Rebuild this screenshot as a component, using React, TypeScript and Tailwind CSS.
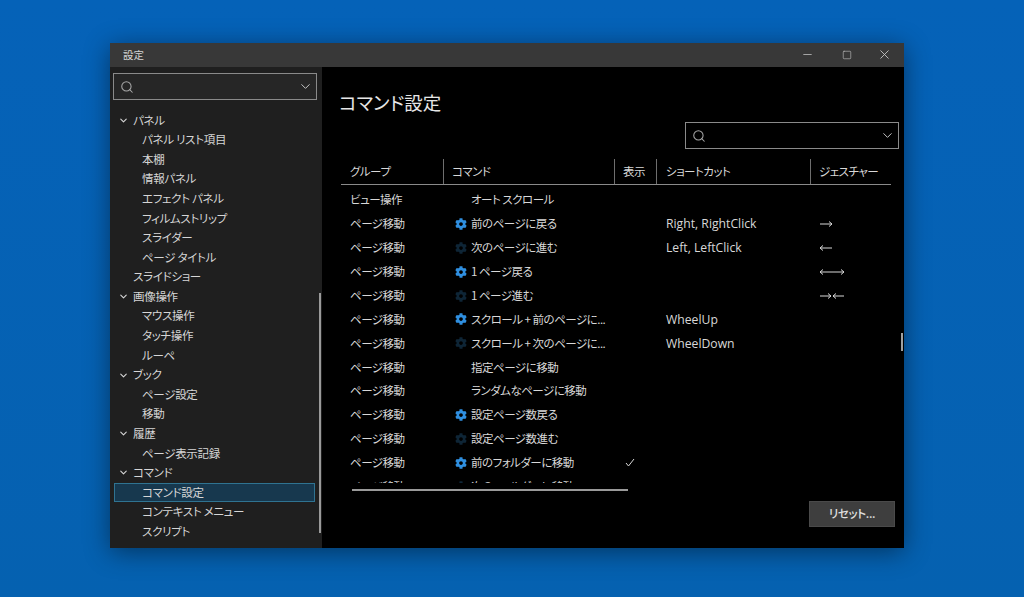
import React from 'react';
import { Search, ChevronDown, Minus, Square, X } from 'lucide-react';
import { FaCog } from 'react-icons/fa';

const font = "font-['Noto_Sans_CJK_JP','Noto_Sans',sans-serif] [font-feature-settings:'palt']";

type TreeItem = { label: string; level: 1 | 2; open?: boolean; selected?: boolean };

const tree: TreeItem[] = [
  { label: 'パネル', level: 1, open: true },
  { label: 'パネル リスト項目', level: 2 },
  { label: '本棚', level: 2 },
  { label: '情報パネル', level: 2 },
  { label: 'エフェクト パネル', level: 2 },
  { label: 'フィルムストリップ', level: 2 },
  { label: 'スライダー', level: 2 },
  { label: 'ページ タイトル', level: 2 },
  { label: 'スライドショー', level: 1 },
  { label: '画像操作', level: 1, open: true },
  { label: 'マウス操作', level: 2 },
  { label: 'タッチ操作', level: 2 },
  { label: 'ルーペ', level: 2 },
  { label: 'ブック', level: 1, open: true },
  { label: 'ページ設定', level: 2 },
  { label: '移動', level: 2 },
  { label: '履歴', level: 1, open: true },
  { label: 'ページ表示記録', level: 2 },
  { label: 'コマンド', level: 1, open: true },
  { label: 'コマンド設定', level: 2, selected: true },
  { label: 'コンテキスト メニュー', level: 2 },
  { label: 'スクリプト', level: 2 },
];

type Row = { group: string; command: string; gear?: 'on' | 'off'; show?: boolean; key?: string; gesture?: string };

const rows: Row[] = [
  { group: 'ビュー操作', command: 'オート スクロール' },
  { group: 'ページ移動', command: '前のページに戻る', gear: 'on', key: 'Right, RightClick', gesture: '→' },
  { group: 'ページ移動', command: '次のページに進む', gear: 'off', key: 'Left, LeftClick', gesture: '←' },
  { group: 'ページ移動', command: '1 ページ戻る', gear: 'on', gesture: '←→' },
  { group: 'ページ移動', command: '1 ページ進む', gear: 'off', gesture: '→←' },
  { group: 'ページ移動', command: 'スクロール + 前のページに...', gear: 'on', key: 'WheelUp' },
  { group: 'ページ移動', command: 'スクロール + 次のページに...', gear: 'off', key: 'WheelDown' },
  { group: 'ページ移動', command: '指定ページに移動' },
  { group: 'ページ移動', command: 'ランダムなページに移動' },
  { group: 'ページ移動', command: '設定ページ数戻る', gear: 'on' },
  { group: 'ページ移動', command: '設定ページ数進む', gear: 'off' },
  { group: 'ページ移動', command: '前のフォルダーに移動', gear: 'on', show: true },
  { group: 'ページ移動', command: '次のフォルダーに移動', gear: 'off', show: true },
];

const Arrows: React.FC<{ kind: string }> = ({ kind }) => {
  const paths: Record<string, string> = {
    '→': 'M1 5H13M10 2.5L13 5L10 7.5',
    '←': 'M1 5H13M4 2.5L1 5L4 7.5',
    '←→': 'M1 5H25M4 2.5L1 5L4 7.5M22 2.5L25 5L22 7.5',
    '→←': 'M1 5H12M9 2.5L12 5L9 7.5M25 5H14M17 2.5L14 5L17 7.5',
  };
  return (
    <svg width="26" height="10" viewBox="0 0 26 10" fill="none" stroke="#d8d8d8" strokeWidth="1">
      <path d={paths[kind]} />
    </svg>
  );
};

const SearchBox: React.FC<{ className: string }> = ({ className }) => (
  <div className={`flex items-center justify-between pl-[6px] pr-[3px] border border-[#8a8a8a] ${className}`}>
    <Search size={14} strokeWidth={1.8} className="text-[#a8a8a8]" />
    <ChevronDown size={15} strokeWidth={1.6} className="text-[#c4c4c4]" />
  </div>
);

export default function App() {
  return (
    <div className={`h-[597px] w-[1024px] overflow-hidden bg-gradient-to-b from-[#0562b8] to-[#0561b0] pl-[110px] pt-[43px] ${font}`}>
      <div className="flex h-[505px] w-[794px] flex-col shadow-[0_4px_24px_rgba(0,0,0,0.45)]">
        {/* Title bar */}
        <div className="flex h-[24px] shrink-0 items-center justify-between bg-[#383838] pb-[1px] pl-[13px] pr-[12px]">
          <span className="text-[10.5px] text-[#d4d4d4]">設定</span>
          <div className="flex items-center text-[#c8c8c8]">
            <Minus size={13} strokeWidth={1.4} />
            <Square size={10} strokeWidth={1.4} className="ml-[28px]" />
            <X size={15} strokeWidth={1.4} className="ml-[25px]" />
          </div>
        </div>

        <div className="flex min-h-0 flex-1">
          {/* Sidebar */}
          <div className="relative w-[212px] shrink-0 bg-[#1f1f1f] pl-[3px] pt-[6px]">
            <SearchBox className="h-[27px] w-[204px] bg-[#262626]" />
            <div className="ml-[1px] mt-[10.5px]">
              {tree.map((item) => (
                <div
                  key={item.label}
                  className={`flex h-[19.6px] w-[201px] items-center text-[11.5px] leading-none tracking-[-0.3px] text-[#d6d6d6] ${item.selected ? 'border border-[#2f7391] bg-[#17384e] pl-[27px]' : item.level === 2 ? 'pl-[28px]' : 'pl-[4px]'}`}
                >
                  {item.level === 1 && (
                    <span className="flex w-[15px] shrink-0 items-center">
                      {item.open && <ChevronDown size={11} strokeWidth={2.4} className="text-[#d6d6d6]" />}
                    </span>
                  )}
                  <span className="whitespace-nowrap">{item.label}</span>
                </div>
              ))}
            </div>
            <div className="absolute right-[1px] top-[226px] h-[240px] w-[2px] bg-[#9a9a9a]" />
          </div>

          {/* Main */}
          <div className="relative flex min-w-0 flex-1 flex-col bg-black pl-[17px]">
            <h1 className="mt-[21px] text-[18.5px] leading-[28px] text-[#e6e6e6]">コマンド設定</h1>
            <div className="mt-[6px] flex justify-end pr-[5px]">
              <SearchBox className="h-[27px] w-[214px]" />
            </div>

            {/* Table header */}
            <div className="ml-[2px] mt-[9px] flex h-[27px] w-[550px] border-b border-[#8a8a8a] pt-[1px] text-[11.5px] tracking-[-0.5px] text-[#d8d8d8]">
              <div className="flex w-[103px] items-center border-r border-[#6e6e6e] pl-[9px]">グループ</div>
              <div className="flex w-[171px] items-center border-r border-[#6e6e6e] pl-[8px]">コマンド</div>
              <div className="flex w-[42px] items-center border-r border-[#6e6e6e] pl-[8px]">表示</div>
              <div className="flex w-[154px] items-center border-r border-[#6e6e6e] pl-[9px]">ショートカット</div>
              <div className="flex items-center pl-[8px]">ジェスチャー</div>
            </div>

            {/* Table rows */}
            <div className="ml-[2px] mt-[3px] h-[295px] w-[550px] overflow-hidden text-[11.5px] tracking-[-0.5px] text-[#d8d8d8]">
              {rows.map((row, i) => (
                <div key={i} className="flex h-[23.9px] items-center">
                  <div className="w-[103px] shrink-0 pl-[9px]">{row.group}</div>
                  <div className="flex w-[171px] shrink-0 items-center pl-[11px]">
                    <span className="flex w-[16px] shrink-0">
                      {row.gear === 'on' && <FaCog size={12} className="text-[#2f8fe0]" />}
                      {row.gear === 'off' && <FaCog size={12} className="text-[#0e2536]" />}
                    </span>
                    <span className="whitespace-nowrap">{row.command}</span>
                  </div>
                  <div className="w-[42px] shrink-0 pl-[10px]">
                    {row.show && (
                      <svg width="10" height="9" viewBox="0 0 10 9" fill="none" stroke="#d8d8d8" strokeWidth="1">
                        <path d="M1 5L3.5 8L9 1" />
                      </svg>
                    )}
                  </div>
                  <div className="w-[154px] shrink-0 whitespace-nowrap pl-[9px] pt-[1px] font-['Open_Sans','Noto_Sans',sans-serif] text-[12.2px] tracking-normal">{row.key}</div>
                  <div className="pl-[8px]">{row.gesture && <Arrows kind={row.gesture} />}</div>
                </div>
              ))}
            </div>

            {/* Horizontal scrollbar */}
            <div className="ml-[13px] mt-[6px] h-[2px] w-[276px] bg-[#9a9a9a]" />

            <div className="mt-[10px] flex justify-end pr-[9px]">
              <button className="h-[26px] w-[86px] border border-[#4a4a4a] bg-[#3e3e3e] text-[11.5px] font-medium tracking-[-0.3px] text-[#e0e0e0]">
                リセット...
              </button>
            </div>

            <div className="absolute right-[1px] top-[266px] h-[18px] w-[2px] bg-[#a0a0a0]" />
          </div>
        </div>
      </div>
    </div>
  );
}
